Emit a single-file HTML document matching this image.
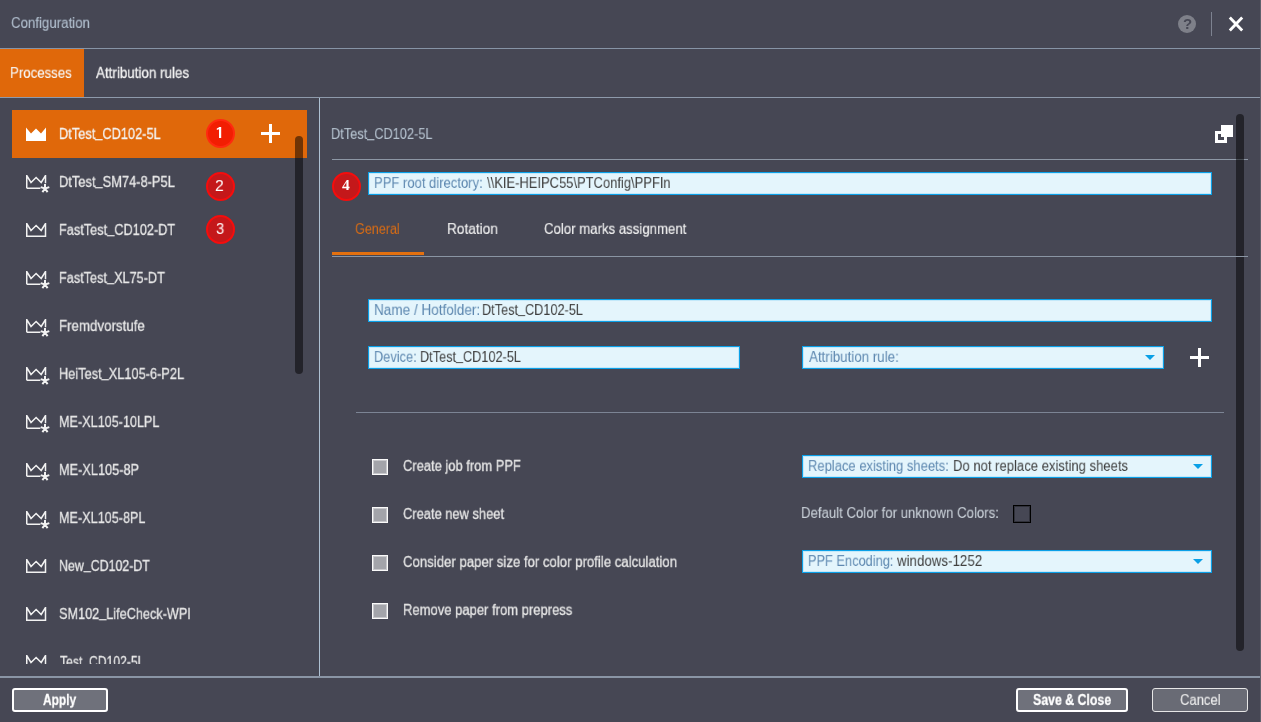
<!DOCTYPE html>
<html><head><meta charset="utf-8"><style>
html,body{margin:0;padding:0;width:1261px;height:722px;overflow:hidden;background:#464754;}
body{position:relative;font-family:"Liberation Sans",sans-serif;}
.t{position:absolute;white-space:pre;transform-origin:0 0;will-change:transform;}
.r{position:absolute;box-sizing:border-box;}
</style></head><body>
<!-- lines -->
<div class="r" style="left:0;top:48px;width:1260px;height:1px;background:#8794a6"></div>
<div class="r" style="left:0;top:49px;width:84px;height:48px;background:#e0680a"></div>
<div class="r" style="left:0;top:97px;width:1260px;height:1px;background:#8e9aab"></div>
<div class="r" style="left:1260px;top:0;width:1px;height:722px;background:#5e616c"></div>
<div class="r" style="left:319px;top:98px;width:1px;height:578px;background:#aec1d3"></div>
<div class="r" style="left:0;top:676px;width:1260px;height:2px;background:#8a95a5"></div>
<!-- help / close -->
<div class="r" style="left:1178px;top:14.5px;width:18px;height:18px;border-radius:50%;background:#7e8089"></div>
<div class="t" style="left:1182.5px;top:15px;font-size:15px;line-height:18px;font-weight:bold;color:#464754">?</div>
<div class="r" style="left:1211px;top:12px;width:1px;height:24px;background:#7d8290"></div>
<svg class="r" style="left:1226px;top:14px" width="20" height="20" viewBox="0 0 20 20"><path d="M3.8 3.6 L16.2 16.4 M16.2 3.6 L3.8 16.4" stroke="#fff" stroke-width="2.9"/></svg>
<!-- selected item -->
<div class="r" style="left:12px;top:110px;width:295px;height:48px;background:#e0680a"></div>
<svg class="r" style="left:26px;top:127px" width="20" height="14" viewBox="0 0 20 14"><path d="M0 0.5 L5 6.5 L10 1.5 L15 6.5 L20 0.5 V14 H0 Z" fill="#fff"/></svg>
<div class="r" style="left:205.5px;top:118.5px;width:29px;height:29px;border-radius:50%;background:#f21e02;border:2px solid #ff2a10"></div>
<div class="r" style="left:261px;top:132px;width:19px;height:3px;background:#fff"></div>
<div class="r" style="left:269px;top:124px;width:3px;height:19px;background:#fff"></div>
<div class="r" style="left:295px;top:136px;width:8px;height:238px;border-radius:4px;background:rgba(0,0,0,0.5)"></div>
<!-- badges -->
<div class="r" style="left:205.5px;top:171.5px;width:29px;height:29px;border-radius:50%;background:#c4181a;border:2px solid #f50d0d"></div>
<div class="r" style="left:205.5px;top:214.5px;width:29px;height:29px;border-radius:50%;background:#c4181a;border:2px solid #f50d0d"></div>
<div class="r" style="left:331.5px;top:171.5px;width:29px;height:29px;border-radius:50%;background:#c4181a;border:2px solid #f50d0d"></div>
<!-- right header -->
<div class="r" style="left:332px;top:159px;width:916px;height:1px;background:#8d97a5"></div>
<svg class="r" style="left:1215px;top:125px" width="18" height="18" viewBox="0 0 18 18"><path d="M0 6 H12 V18 H0 Z M3 9 V15 H9 V9 Z" fill="#fff" fill-rule="evenodd"/><rect x="6" y="0" width="12" height="12" fill="#fff"/></svg>
<div class="r" style="left:1236px;top:114px;width:8px;height:537px;border-radius:4px;background:rgba(0,0,0,0.5)"></div>
<!-- fields -->
<div class="r" style="left:368px;top:172px;width:844px;height:23px;background:#e4f5fc;border:1px solid #0aa0e8;box-shadow:inset 0 0 0 1px rgba(10,160,232,0.15)"></div>
<div class="r" style="left:332px;top:252px;width:92px;height:3px;background:#e3700f"></div>
<div class="r" style="left:332px;top:256px;width:916px;height:1px;background:#8a95a3"></div>
<div class="r" style="left:368px;top:299px;width:844px;height:23px;background:#e4f5fc;border:1px solid #0aa0e8;box-shadow:inset 0 0 0 1px rgba(10,160,232,0.15)"></div>
<div class="r" style="left:368px;top:346px;width:372px;height:23px;background:#e4f5fc;border:1px solid #0aa0e8;box-shadow:inset 0 0 0 1px rgba(10,160,232,0.15)"></div>
<div class="r" style="left:802px;top:346px;width:362px;height:23px;background:#e4f5fc;border:1px solid #0aa0e8;box-shadow:inset 0 0 0 1px rgba(10,160,232,0.15)"></div>
<svg class="r" style="left:1145px;top:355px" width="10" height="5" viewBox="0 0 10 5"><path d="M0 0 H10 L5 5 Z" fill="#0aa0e6"/></svg>
<div class="r" style="left:1190px;top:356px;width:19px;height:3px;background:#fff"></div>
<div class="r" style="left:1198px;top:348px;width:3px;height:19px;background:#fff"></div>
<div class="r" style="left:356px;top:412px;width:868px;height:1px;background:#7c8494"></div>
<!-- checkboxes -->
<div class="r" style="left:372px;top:459px;width:16px;height:16px;background:#a3a4aa;border:1px solid #fafafa;box-shadow:inset 0 0 0 1px rgba(255,255,255,0.4)"></div>
<div class="r" style="left:372px;top:507px;width:16px;height:16px;background:#a3a4aa;border:1px solid #fafafa;box-shadow:inset 0 0 0 1px rgba(255,255,255,0.4)"></div>
<div class="r" style="left:372px;top:555px;width:16px;height:16px;background:#a3a4aa;border:1px solid #fafafa;box-shadow:inset 0 0 0 1px rgba(255,255,255,0.4)"></div>
<div class="r" style="left:372px;top:603px;width:16px;height:16px;background:#a3a4aa;border:1px solid #fafafa;box-shadow:inset 0 0 0 1px rgba(255,255,255,0.4)"></div>
<div class="r" style="left:802px;top:455px;width:410px;height:23px;background:#e4f5fc;border:1px solid #0aa0e8;box-shadow:inset 0 0 0 1px rgba(10,160,232,0.15)"></div>
<svg class="r" style="left:1193px;top:464px" width="10" height="5" viewBox="0 0 10 5"><path d="M0 0 H10 L5 5 Z" fill="#0aa0e6"/></svg>
<div class="r" style="left:1013px;top:505px;width:18px;height:18px;border:1px solid #000;box-shadow:inset 0 0 0 1px rgba(0,0,0,0.3)"></div>
<div class="r" style="left:802px;top:550px;width:410px;height:23px;background:#e4f5fc;border:1px solid #0aa0e8;box-shadow:inset 0 0 0 1px rgba(10,160,232,0.15)"></div>
<svg class="r" style="left:1193px;top:559px" width="10" height="5" viewBox="0 0 10 5"><path d="M0 0 H10 L5 5 Z" fill="#0aa0e6"/></svg>
<!-- buttons -->
<div class="r" style="left:12px;top:688px;width:96px;height:24px;background:#6f717b;border:2px solid #fff;border-radius:3px"></div>
<div class="r" style="left:1016px;top:688px;width:112px;height:24px;background:#6f717b;border:2px solid #fff;border-radius:3px"></div>
<div class="r" style="left:1152px;top:688px;width:96px;height:24px;background:#696b75;border:1.5px solid #e6e6e6;border-radius:3px"></div>
<!-- icons -->
<svg class="r" style="left:26px;top:175px" width="24" height="20" viewBox="0 0 24 20"><path d="M0.75 13.25 V0.5 L5 7.5 L10.1 2.5 L15.2 7.5 L19.5 0.5 V8.2" fill="none" stroke="#f2f2f2" stroke-width="1.5"/><path d="M0.75 13.25 H14.4" fill="none" stroke="#f2f2f2" stroke-width="1.5"/><path d="M19 13.5 V9 M19 13.5 L23.3 12.1 M19 13.5 L14.7 12.1 M19 13.5 L21.6 17.1 M19 13.5 L16.4 17.1" stroke="#f2f2f2" stroke-width="2" stroke-linecap="butt"/></svg>
<svg class="r" style="left:26px;top:223px" width="21" height="15" viewBox="0 0 21 15"><path d="M0.75 0.5 V13.25 H19.5 V0.5 L15.2 7.5 L10.1 2.5 L5 7.5 Z" fill="none" stroke="#f2f2f2" stroke-width="1.5" stroke-linejoin="miter"/></svg>
<svg class="r" style="left:26px;top:271px" width="24" height="20" viewBox="0 0 24 20"><path d="M0.75 13.25 V0.5 L5 7.5 L10.1 2.5 L15.2 7.5 L19.5 0.5 V8.2" fill="none" stroke="#f2f2f2" stroke-width="1.5"/><path d="M0.75 13.25 H14.4" fill="none" stroke="#f2f2f2" stroke-width="1.5"/><path d="M19 13.5 V9 M19 13.5 L23.3 12.1 M19 13.5 L14.7 12.1 M19 13.5 L21.6 17.1 M19 13.5 L16.4 17.1" stroke="#f2f2f2" stroke-width="2" stroke-linecap="butt"/></svg>
<svg class="r" style="left:26px;top:319px" width="24" height="20" viewBox="0 0 24 20"><path d="M0.75 13.25 V0.5 L5 7.5 L10.1 2.5 L15.2 7.5 L19.5 0.5 V8.2" fill="none" stroke="#f2f2f2" stroke-width="1.5"/><path d="M0.75 13.25 H14.4" fill="none" stroke="#f2f2f2" stroke-width="1.5"/><path d="M19 13.5 V9 M19 13.5 L23.3 12.1 M19 13.5 L14.7 12.1 M19 13.5 L21.6 17.1 M19 13.5 L16.4 17.1" stroke="#f2f2f2" stroke-width="2" stroke-linecap="butt"/></svg>
<svg class="r" style="left:26px;top:367px" width="24" height="20" viewBox="0 0 24 20"><path d="M0.75 13.25 V0.5 L5 7.5 L10.1 2.5 L15.2 7.5 L19.5 0.5 V8.2" fill="none" stroke="#f2f2f2" stroke-width="1.5"/><path d="M0.75 13.25 H14.4" fill="none" stroke="#f2f2f2" stroke-width="1.5"/><path d="M19 13.5 V9 M19 13.5 L23.3 12.1 M19 13.5 L14.7 12.1 M19 13.5 L21.6 17.1 M19 13.5 L16.4 17.1" stroke="#f2f2f2" stroke-width="2" stroke-linecap="butt"/></svg>
<svg class="r" style="left:26px;top:415px" width="24" height="20" viewBox="0 0 24 20"><path d="M0.75 13.25 V0.5 L5 7.5 L10.1 2.5 L15.2 7.5 L19.5 0.5 V8.2" fill="none" stroke="#f2f2f2" stroke-width="1.5"/><path d="M0.75 13.25 H14.4" fill="none" stroke="#f2f2f2" stroke-width="1.5"/><path d="M19 13.5 V9 M19 13.5 L23.3 12.1 M19 13.5 L14.7 12.1 M19 13.5 L21.6 17.1 M19 13.5 L16.4 17.1" stroke="#f2f2f2" stroke-width="2" stroke-linecap="butt"/></svg>
<svg class="r" style="left:26px;top:463px" width="24" height="20" viewBox="0 0 24 20"><path d="M0.75 13.25 V0.5 L5 7.5 L10.1 2.5 L15.2 7.5 L19.5 0.5 V8.2" fill="none" stroke="#f2f2f2" stroke-width="1.5"/><path d="M0.75 13.25 H14.4" fill="none" stroke="#f2f2f2" stroke-width="1.5"/><path d="M19 13.5 V9 M19 13.5 L23.3 12.1 M19 13.5 L14.7 12.1 M19 13.5 L21.6 17.1 M19 13.5 L16.4 17.1" stroke="#f2f2f2" stroke-width="2" stroke-linecap="butt"/></svg>
<svg class="r" style="left:26px;top:511px" width="24" height="20" viewBox="0 0 24 20"><path d="M0.75 13.25 V0.5 L5 7.5 L10.1 2.5 L15.2 7.5 L19.5 0.5 V8.2" fill="none" stroke="#f2f2f2" stroke-width="1.5"/><path d="M0.75 13.25 H14.4" fill="none" stroke="#f2f2f2" stroke-width="1.5"/><path d="M19 13.5 V9 M19 13.5 L23.3 12.1 M19 13.5 L14.7 12.1 M19 13.5 L21.6 17.1 M19 13.5 L16.4 17.1" stroke="#f2f2f2" stroke-width="2" stroke-linecap="butt"/></svg>
<svg class="r" style="left:26px;top:559px" width="21" height="15" viewBox="0 0 21 15"><path d="M0.75 0.5 V13.25 H19.5 V0.5 L15.2 7.5 L10.1 2.5 L5 7.5 Z" fill="none" stroke="#f2f2f2" stroke-width="1.5" stroke-linejoin="miter"/></svg>
<svg class="r" style="left:26px;top:607px" width="21" height="15" viewBox="0 0 21 15"><path d="M0.75 0.5 V13.25 H19.5 V0.5 L15.2 7.5 L10.1 2.5 L5 7.5 Z" fill="none" stroke="#f2f2f2" stroke-width="1.5" stroke-linejoin="miter"/></svg>
<svg class="r" style="left:26px;top:655px" width="21" height="15" viewBox="0 0 21 15"><path d="M0.75 0.5 V13.25 H19.5 V0.5 L15.2 7.5 L10.1 2.5 L5 7.5 Z" fill="none" stroke="#f2f2f2" stroke-width="1.5" stroke-linejoin="miter"/></svg>
<svg class="r" style="left:0;top:0" width="1261" height="722"><rect x="219" y="127" width="2.2" height="11" fill="#fff"/><path d="M216.8 128.4 L219.6 127 V129 L216.8 129.9 Z" fill="#fff"/></svg>

<div class="t" style="left:11.04px;top:16.19px;font-size:16px;line-height:16px;color:#b3c1d0;font-weight:normal;font-family:'Liberation Sans';transform:scale(0.8291,0.9167);-webkit-text-stroke:0.1px #b3c1d0;">Configuration</div>
<div class="t" style="left:10.34px;top:65.99px;font-size:16px;line-height:16px;color:#f7f7f7;font-weight:normal;font-family:'Liberation Sans';transform:scale(0.8268,0.9167);-webkit-text-stroke:0.1px #f7f7f7;">Processes</div>
<div class="t" style="left:96.00px;top:65.99px;font-size:16px;line-height:16px;color:#f2f2f2;font-weight:normal;font-family:'Liberation Sans';transform:scale(0.8375,0.9167);-webkit-text-stroke:0.3px #f2f2f2;">Attribution rules</div>
<div class="t" style="left:58.78px;top:126.99px;font-size:16px;line-height:16px;color:#f4f4f4;font-weight:normal;font-family:'Liberation Sans';transform:scale(0.7994,0.9167);-webkit-text-stroke:0.3px #f4f4f4;">DtTest<span style="position:relative;top:-2.2px">_</span>CD102-5L</div>
<div class="t" style="left:58.77px;top:175.09px;font-size:16px;line-height:16px;color:#e8e8e8;font-weight:normal;font-family:'Liberation Sans';transform:scale(0.8036,0.9167);-webkit-text-stroke:0.3px #e8e8e8;">DtTest<span style="position:relative;top:-2.2px">_</span>SM74-8-P5L</div>
<div class="t" style="left:58.78px;top:223.29px;font-size:16px;line-height:16px;color:#e8e8e8;font-weight:normal;font-family:'Liberation Sans';transform:scale(0.7961,0.9167);-webkit-text-stroke:0.3px #e8e8e8;">FastTest<span style="position:relative;top:-2.2px">_</span>CD102-DT</div>
<div class="t" style="left:58.78px;top:270.89px;font-size:16px;line-height:16px;color:#e8e8e8;font-weight:normal;font-family:'Liberation Sans';transform:scale(0.7931,0.9167);-webkit-text-stroke:0.3px #e8e8e8;">FastTest<span style="position:relative;top:-2.2px">_</span>XL75-DT</div>
<div class="t" style="left:58.74px;top:318.69px;font-size:16px;line-height:16px;color:#e8e8e8;font-weight:normal;font-family:'Liberation Sans';transform:scale(0.8313,0.9167);-webkit-text-stroke:0.3px #e8e8e8;">Fremdvorstufe</div>
<div class="t" style="left:58.78px;top:366.79px;font-size:16px;line-height:16px;color:#e8e8e8;font-weight:normal;font-family:'Liberation Sans';transform:scale(0.7989,0.9167);-webkit-text-stroke:0.3px #e8e8e8;">HeiTest<span style="position:relative;top:-2.2px">_</span>XL105-6-P2L</div>
<div class="t" style="left:58.79px;top:414.99px;font-size:16px;line-height:16px;color:#e8e8e8;font-weight:normal;font-family:'Liberation Sans';transform:scale(0.7897,0.9167);-webkit-text-stroke:0.3px #e8e8e8;">ME-XL105-10LPL</div>
<div class="t" style="left:58.78px;top:462.79px;font-size:16px;line-height:16px;color:#e8e8e8;font-weight:normal;font-family:'Liberation Sans';transform:scale(0.7963,0.9167);-webkit-text-stroke:0.3px #e8e8e8;">ME-XL105-8P</div>
<div class="t" style="left:58.79px;top:510.89px;font-size:16px;line-height:16px;color:#e8e8e8;font-weight:normal;font-family:'Liberation Sans';transform:scale(0.7902,0.9167);-webkit-text-stroke:0.3px #e8e8e8;">ME-XL105-8PL</div>
<div class="t" style="left:58.81px;top:559.09px;font-size:16px;line-height:16px;color:#e8e8e8;font-weight:normal;font-family:'Liberation Sans';transform:scale(0.7741,0.9167);-webkit-text-stroke:0.3px #e8e8e8;">New<span style="position:relative;top:-2.2px">_</span>CD102-DT</div>
<div class="t" style="left:59.29px;top:606.79px;font-size:16px;line-height:16px;color:#e8e8e8;font-weight:normal;font-family:'Liberation Sans';transform:scale(0.7927,0.9167);-webkit-text-stroke:0.3px #e8e8e8;">SM102<span style="position:relative;top:-2.2px">_</span>LifeCheck-WPI</div>
<div class="t" style="left:59.56px;top:654.99px;font-size:16px;line-height:16px;color:#e8e8e8;font-weight:normal;font-family:'Liberation Sans';transform:scale(0.7588,0.9167);-webkit-text-stroke:0.3px #e8e8e8;">Test<span style="position:relative;top:-2.2px">_</span>CD102-5L</div>
<div class="t" style="left:330.88px;top:126.79px;font-size:16px;line-height:16px;color:#b5c2cf;font-weight:normal;font-family:'Liberation Sans';transform:scale(0.7978,0.9167);-webkit-text-stroke:0.1px #b5c2cf;">DtTest<span style="position:relative;top:-2.2px">_</span>CD102-5L</div>
<div class="t" style="left:355.47px;top:221.89px;font-size:16px;line-height:16px;color:#d96c14;font-weight:normal;font-family:'Liberation Sans';transform:scale(0.7873,0.9167);">General</div>
<div class="t" style="left:447.01px;top:221.99px;font-size:16px;line-height:16px;color:#f0f0f0;font-weight:normal;font-family:'Liberation Sans';transform:scale(0.8534,0.9167);-webkit-text-stroke:0.15px #f0f0f0;">Rotation</div>
<div class="t" style="left:544.34px;top:221.99px;font-size:16px;line-height:16px;color:#f0f0f0;font-weight:normal;font-family:'Liberation Sans';transform:scale(0.8251,0.9167);-webkit-text-stroke:0.15px #f0f0f0;">Color marks assignment</div>
<div class="t" style="left:374.16px;top:175.69px;font-size:16px;line-height:16px;color:#5e88b0;font-weight:normal;font-family:'Liberation Sans';transform:scale(0.8149,0.9167);">PPF root directory:</div>
<div class="t" style="left:486.80px;top:175.69px;font-size:16px;line-height:16px;color:#404040;font-weight:normal;font-family:'Liberation Sans';transform:scale(0.8098,0.9167);">\\KIE-HEIPC55\PTConfig\PPFIn</div>
<div class="t" style="left:373.82px;top:302.99px;font-size:16px;line-height:16px;color:#5e88b0;font-weight:normal;font-family:'Liberation Sans';transform:scale(0.8468,0.9167);">Name / Hotfolder:</div>
<div class="t" style="left:482.38px;top:302.99px;font-size:16px;line-height:16px;color:#404040;font-weight:normal;font-family:'Liberation Sans';transform:scale(0.7930,0.9167);">DtTest<span style="position:relative;top:-2.2px">_</span>CD102-5L</div>
<div class="t" style="left:373.88px;top:350.19px;font-size:16px;line-height:16px;color:#5e88b0;font-weight:normal;font-family:'Liberation Sans';transform:scale(0.7993,0.9167);">Device:</div>
<div class="t" style="left:419.58px;top:350.19px;font-size:16px;line-height:16px;color:#404040;font-weight:normal;font-family:'Liberation Sans';transform:scale(0.7930,0.9167);">DtTest<span style="position:relative;top:-2.2px">_</span>CD102-5L</div>
<div class="t" style="left:809.40px;top:350.19px;font-size:16px;line-height:16px;color:#5e88b0;font-weight:normal;font-family:'Liberation Sans';transform:scale(0.8342,0.9167);">Attribution rule:</div>
<div class="t" style="left:403.15px;top:458.99px;font-size:16px;line-height:16px;color:#e6e6e6;font-weight:normal;font-family:'Liberation Sans';transform:scale(0.8081,0.9167);-webkit-text-stroke:0.3px #e6e6e6;">Create job from PPF</div>
<div class="t" style="left:403.16px;top:506.99px;font-size:16px;line-height:16px;color:#e6e6e6;font-weight:normal;font-family:'Liberation Sans';transform:scale(0.8055,0.9167);-webkit-text-stroke:0.3px #e6e6e6;">Create new sheet</div>
<div class="t" style="left:403.14px;top:554.99px;font-size:16px;line-height:16px;color:#e6e6e6;font-weight:normal;font-family:'Liberation Sans';transform:scale(0.8238,0.9167);-webkit-text-stroke:0.3px #e6e6e6;">Consider paper size for color profile calculation</div>
<div class="t" style="left:402.76px;top:602.99px;font-size:16px;line-height:16px;color:#e6e6e6;font-weight:normal;font-family:'Liberation Sans';transform:scale(0.8138,0.9167);-webkit-text-stroke:0.3px #e6e6e6;">Remove paper from prepress</div>
<div class="t" style="left:808.36px;top:458.99px;font-size:16px;line-height:16px;color:#5e88b0;font-weight:normal;font-family:'Liberation Sans';transform:scale(0.8117,0.9167);">Replace existing sheets:</div>
<div class="t" style="left:952.65px;top:458.99px;font-size:16px;line-height:16px;color:#404040;font-weight:normal;font-family:'Liberation Sans';transform:scale(0.8166,0.9167);">Do not replace existing sheets</div>
<div class="t" style="left:800.95px;top:505.99px;font-size:16px;line-height:16px;color:#c9d0d8;font-weight:normal;font-family:'Liberation Sans';transform:scale(0.8238,0.9167);-webkit-text-stroke:0.1px #c9d0d8;">Default Color for unknown Colors:</div>
<div class="t" style="left:808.38px;top:554.49px;font-size:16px;line-height:16px;color:#5e88b0;font-weight:normal;font-family:'Liberation Sans';transform:scale(0.7997,0.9167);">PPF Encoding:</div>
<div class="t" style="left:896.53px;top:554.49px;font-size:16px;line-height:16px;color:#404040;font-weight:normal;font-family:'Liberation Sans';transform:scale(0.8328,0.9167);">windows-1252</div>
<div class="t" style="left:42.76px;top:692.99px;font-size:16px;line-height:16px;color:#ffffff;font-weight:bold;font-family:'Liberation Sans';transform:scale(0.7468,0.9167);-webkit-text-stroke:0.3px #ffffff;">Apply</div>
<div class="t" style="left:1033.45px;top:692.99px;font-size:16px;line-height:16px;color:#ffffff;font-weight:bold;font-family:'Liberation Sans';transform:scale(0.7710,0.9167);-webkit-text-stroke:0.3px #ffffff;">Save &amp; Close</div>
<div class="t" style="left:1179.95px;top:692.99px;font-size:16px;line-height:16px;color:#ececec;font-weight:normal;font-family:'Liberation Sans';transform:scale(0.8165,0.9167);-webkit-text-stroke:0.15px #ececec;">Cancel</div>
<div class="t" style="left:215.32px;top:178.99px;font-size:16px;line-height:16px;color:#ffffff;font-weight:normal;font-family:'Liberation Sans';transform:scale(0.9783,0.9167);">2</div>
<div class="t" style="left:215.66px;top:222.39px;font-size:16px;line-height:16px;color:#ffffff;font-weight:normal;font-family:'Liberation Sans';transform:scale(0.9184,0.9167);">3</div>
<div class="t" style="left:341.84px;top:179.45px;font-size:14px;line-height:14px;color:#ffffff;font-weight:bold;font-family:'Liberation Serif';transform:scale(1.1161,1.0000);">4</div>
<div class="r" style="left:0;top:664px;width:319px;height:12px;background:#464754"></div>

</body></html>
